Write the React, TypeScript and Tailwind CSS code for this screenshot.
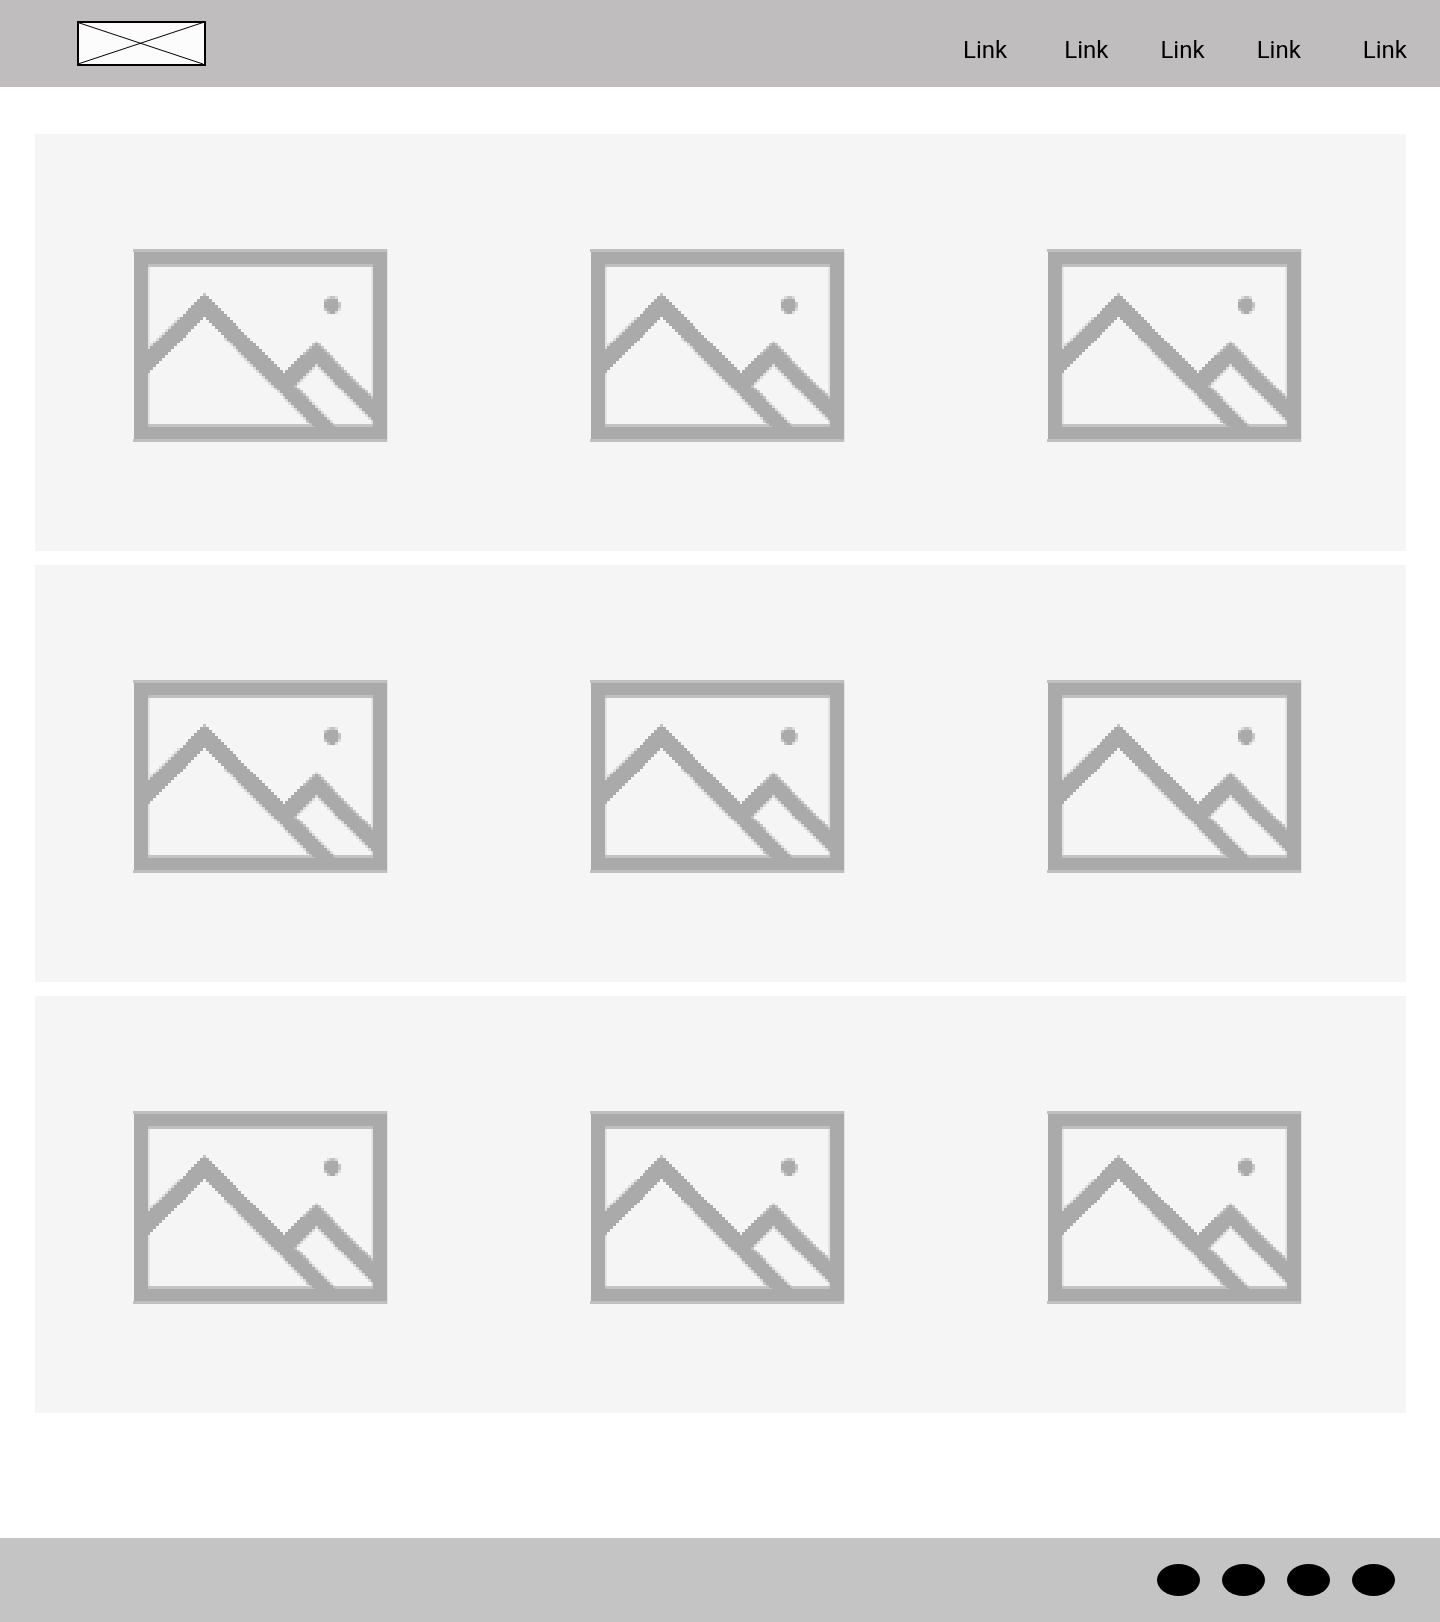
const links = [
  { id: 'first', spacing: '' },
  { id: 'second', spacing: 'ml-[57px]' },
  { id: 'third', spacing: 'ml-[52px]' },
  { id: 'fourth', spacing: 'ml-[52px]' },
  { id: 'fifth', spacing: 'ml-[62px]' },
];

const rows = [0, 1, 2];
const columns = [0, 1, 2];
const socials = ['Social 1', 'Social 2', 'Social 3', 'Social 4'];

// Outline of the two peaks inside the placeholder frame.
const peaks: [number, number][] = [
  [107, 221],
  [169.7, 160],
  [249, 239.3],
  [281.3, 207.5],
  [344, 270],
  [344, 293],
  [281.3, 230.5],
  [260.5, 251.5],
  [304, 296],
  [281, 296],
  [169.7, 182.7],
  [107, 245],
];
const sun = { x: 297, y: 171.5, r: 8.3 };

function isInk(x: number, y: number) {
  if (Math.hypot(x - sun.x, y - sun.y) <= sun.r) return true;
  let inside = false;
  for (let i = 0, j = peaks.length - 1; i < peaks.length; j = i++) {
    const [xi, yi] = peaks[i];
    const [xj, yj] = peaks[j];
    if (yi > y !== yj > y && x < ((xj - xi) * (y - yi)) / (yj - yi) + xi) inside = !inside;
  }
  return inside;
}

// The drawing is made of coarse square dots, grouped here by how much ink covers each.
const shades = ['#dcdcdc', '#c3c3c3', '#aaaaaa'];
const dotPaths = ['', '', ''];
const dot = 2.94;
const samples = 4;
for (let col = 0; col < 77; col++) {
  for (let row = 0; row < 55; row++) {
    const x = 112.3 + col * dot;
    const y = 133 + row * dot;
    if (x > 339 || y > 292) continue;
    let hits = 0;
    for (let a = 0; a < samples; a++) {
      for (let b = 0; b < samples; b++) {
        if (isInk(x + ((a + 0.5) * dot) / samples, y + ((b + 0.5) * dot) / samples)) hits++;
      }
    }
    const share = hits / (samples * samples);
    if (share < 0.15) continue;
    const level = share < 0.45 ? 0 : share < 0.8 ? 1 : 2;
    dotPaths[level] += `M${x.toFixed(2)} ${y.toFixed(2)}h${dot}v${dot}h-${dot}z`;
  }
}

function Logo() {
  return (
    <a href="#" aria-label="Home" className="block">
      <svg viewBox="0 0 129 45" className="block h-[45px] w-[129px]">
        <rect x="1" y="1" width="127" height="43" fill="#fcfcfc" stroke="#000" strokeWidth="2" />
        <path d="M1 1.5L126 43M1 43L126 1.5" stroke="#000" strokeWidth="1" fill="none" />
      </svg>
    </a>
  );
}

function Placeholder() {
  return (
    <svg
      viewBox="0 0 457 417"
      role="img"
      aria-label="Image placeholder"
      shapeRendering="crispEdges"
      className="block w-full"
    >
      {dotPaths.map((d, level) => (
        <path key={shades[level]} d={d} fill={shades[level]} />
      ))}
      {/* soft edges of the frame */}
      <path fill="#e4e4e4" d="M113 133H115V290H113ZM336 133H338V290H336ZM352 115H353V308H352Z" className="mix-blend-darken" />
      <path fill="#bfbfbf" d="M98 115H352V118H98ZM113 130H338V133H113ZM98 305H352V308H98Z" />
      <path fill="#c3c3c3" d="M113 290H338V293H113Z" className="mix-blend-darken" />
      {/* frame */}
      <path fill="#aaaaaa" d="M99 118H352V130H99ZM99 293H352V305H99ZM99 118H113V305H99ZM338 118H352V305H338Z" />
    </svg>
  );
}

export default function App() {
  return (
    <div className="flex min-h-screen flex-col bg-white font-[Roboto,sans-serif] text-black">
      <header className="flex h-[87px] items-center justify-between bg-[#bfbdbe] pr-[33px] pl-[77px]">
        <Logo />
        <nav aria-label="Main" className="flex pt-3 text-2xl leading-7">
          {links.map((link) => (
            <a key={link.id} href="#" className={link.spacing}>
              Link
            </a>
          ))}
        </nav>
      </header>

      <main className="flex flex-1 flex-col gap-3.5 pt-[47px] pr-[34px] pb-[125px] pl-[35px]">
        {rows.map((row) => (
          <section key={row} className="grid grid-cols-3 bg-[#f5f5f5]">
            {columns.map((column) => (
              <Placeholder key={column} />
            ))}
          </section>
        ))}
      </main>

      <footer className="flex h-[84px] items-center justify-end gap-[22px] bg-[#c4c4c4] pr-[45px]">
        {socials.map((name) => (
          <a key={name} href="#" aria-label={name} className="block h-8 w-[43px] rounded-[50%] bg-black" />
        ))}
      </footer>
    </div>
  );
}
